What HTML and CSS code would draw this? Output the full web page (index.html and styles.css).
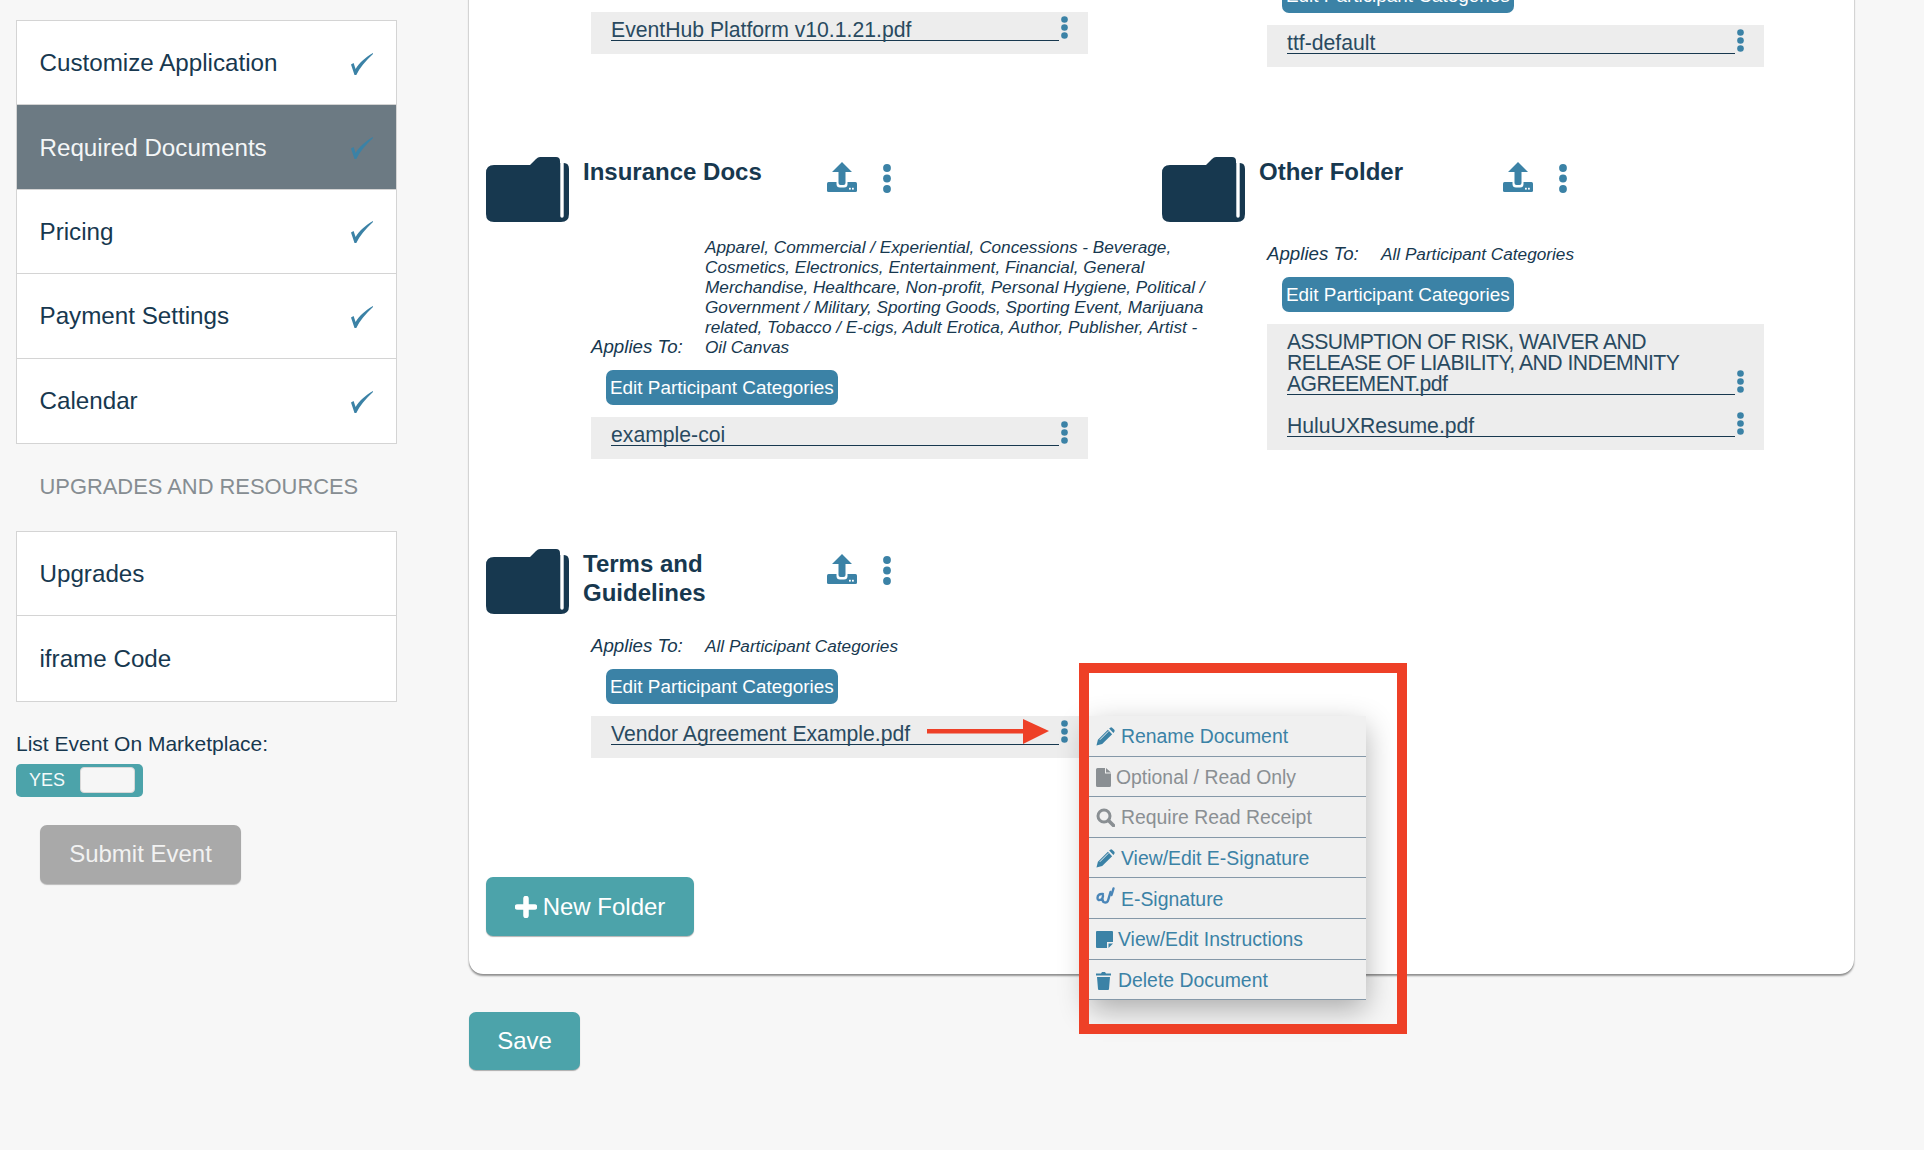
FILE: index.html
```html
<!DOCTYPE html>
<html lang="en">
<head>
<meta charset="utf-8">
<title>Required Documents</title>
<link rel="stylesheet" href="styles.css">
</head>
<body>
<svg class="defs" aria-hidden="true">
  <symbol id="i-check" viewBox="0 0 22 22"><path d="M0 11.5L2.6 10L4.6 16C8 10 15 4 22 0L22 1C14.500 8 8.500 15 5.300 22L3.500 22Z"/></symbol>
  <symbol id="i-dots" viewBox="0 0 7 23"><circle cx="3.500" cy="3.500" r="3.300"/><circle cx="3.500" cy="11.500" r="3.300"/><circle cx="3.500" cy="19.500" r="3.300"/></symbol>
  <symbol id="i-dots-lg" viewBox="0 0 8 29"><circle cx="4" cy="4" r="3.900"/><circle cx="4" cy="14.500" r="3.900"/><circle cx="4" cy="25" r="3.900"/></symbol>
  <symbol id="i-folder" viewBox="0 0 83 65"><path class="f-body" d="M8 8H44L50 2Q52 0 54 0H70Q74 0 74 4V6H78Q83 6 83 12V57Q83 65 75 65H8Q0 65 0 57V16Q0 8 8 8Z"/><path class="f-gap" d="M76 3V59"/></symbol>
  <symbol id="i-upload" viewBox="0 0 30 30"><rect y="20" width="30" height="10" rx="1.500"/><rect class="u-gap" x="9.500" y="17" width="11" height="8.500" rx="3.500"/><path d="M15 0L25 10H18.500V21Q18.500 23 16.500 23H13.500Q11.500 23 11.500 21V10H5Z"/><rect class="u-gap" x="22" y="25.800" width="1.800" height="1.800"/><rect class="u-gap" x="25" y="25.800" width="1.800" height="1.800"/></symbol>
  <symbol id="i-pencil" viewBox="0 0 20 20"><path d="M0.500 19.500L2 13.500L12.500 3L17 7.500L6.500 18ZM13.800 1.700L15 0.700Q16 0 17 0.700L19.300 3Q20 4 19.300 5L18.300 6.200Z"/><path class="m-gap" d="M4 13.500L13 4.500"/></symbol>
</svg>

<div class="page">
  <aside class="sidebar">
    <ul class="nav">
      <li class="nav-item"><span>Customize Application</span><svg class="check"><use href="#i-check"/></svg></li>
      <li class="nav-item is-active"><span>Required Documents</span><svg class="check"><use href="#i-check"/></svg></li>
      <li class="nav-item"><span>Pricing</span><svg class="check"><use href="#i-check"/></svg></li>
      <li class="nav-item"><span>Payment Settings</span><svg class="check"><use href="#i-check"/></svg></li>
      <li class="nav-item"><span>Calendar</span><svg class="check"><use href="#i-check"/></svg></li>
    </ul>
    <h3 class="nav-heading">UPGRADES AND RESOURCES</h3>
    <ul class="nav">
      <li class="nav-item"><span>Upgrades</span></li>
      <li class="nav-item"><span>iframe Code</span></li>
    </ul>
    <div class="market-label">List Event On Marketplace:</div>
    <div class="toggle"><span class="toggle-text">YES</span><span class="toggle-handle"></span></div>
    <button class="btn-submit" type="button">Submit Event</button>
  </aside>

  <main class="main">
    <section class="card">
      <div class="folders">
        <div class="folder">
          <div class="folder-body">
            <button class="btn-edit" type="button">Edit Participant Categories</button>
            <div class="files">
              <div class="file"><a class="file-link">EventHub Platform v10.1.21.pdf</a><svg class="dots"><use href="#i-dots"/></svg></div>
            </div>
          </div>
        </div>
        <div class="folder folder-offset">
          <div class="folder-body">
            <button class="btn-edit" type="button">Edit Participant Categories</button>
            <div class="files">
              <div class="file"><a class="file-link">ttf-default</a><svg class="dots"><use href="#i-dots"/></svg></div>
            </div>
          </div>
        </div>

        <div class="folder">
          <div class="folder-head">
            <svg class="folder-icon"><use href="#i-folder"/></svg>
            <h2 class="folder-title">Insurance Docs</h2>
            <svg class="upload"><use href="#i-upload"/></svg>
            <svg class="dots-lg"><use href="#i-dots-lg"/></svg>
          </div>
          <div class="folder-body">
            <div class="applies">
              <span class="applies-label">Applies To:</span>
              <span class="applies-value">Apparel, Commercial / Experiential, Concessions - Beverage, Cosmetics, Electronics, Entertainment, Financial, General Merchandise, Healthcare, Non-profit, Personal Hygiene, Political / Government / Military, Sporting Goods, Sporting Event, Marijuana related, Tobacco / E-cigs, Adult Erotica, Author, Publisher, Artist - Oil Canvas</span>
            </div>
            <button class="btn-edit" type="button">Edit Participant Categories</button>
            <div class="files">
              <div class="file"><a class="file-link">example-coi</a><svg class="dots"><use href="#i-dots"/></svg></div>
            </div>
          </div>
        </div>

        <div class="folder">
          <div class="folder-head">
            <svg class="folder-icon"><use href="#i-folder"/></svg>
            <h2 class="folder-title">Other Folder</h2>
            <svg class="upload"><use href="#i-upload"/></svg>
            <svg class="dots-lg"><use href="#i-dots-lg"/></svg>
          </div>
          <div class="folder-body">
            <div class="applies applies-single">
              <span class="applies-label">Applies To:</span>
              <span class="applies-value">All Participant Categories</span>
            </div>
            <button class="btn-edit" type="button">Edit Participant Categories</button>
            <div class="files">
              <div class="file"><a class="file-link file-link-caps">ASSUMPTION OF RISK, WAIVER AND RELEASE OF LIABILITY, AND INDEMNITY AGREEMENT.pdf</a><svg class="dots"><use href="#i-dots"/></svg></div>
              <div class="file"><a class="file-link">HuluUXResume.pdf</a><svg class="dots"><use href="#i-dots"/></svg></div>
            </div>
          </div>
        </div>

        <div class="folder">
          <div class="folder-head">
            <svg class="folder-icon"><use href="#i-folder"/></svg>
            <h2 class="folder-title">Terms and Guidelines</h2>
            <svg class="upload"><use href="#i-upload"/></svg>
            <svg class="dots-lg"><use href="#i-dots-lg"/></svg>
          </div>
          <div class="folder-body">
            <div class="applies applies-single">
              <span class="applies-label">Applies To:</span>
              <span class="applies-value">All Participant Categories</span>
            </div>
            <button class="btn-edit" type="button">Edit Participant Categories</button>
            <div class="files">
              <div class="file"><a class="file-link">Vendor Agreement Example.pdf</a><svg class="dots"><use href="#i-dots"/></svg></div>
              <svg class="arrow" viewBox="0 0 122 25"><rect y="10" width="98" height="4.500"/><path d="M96 0L122 12L96 25Z"/></svg>
              <ul class="menu">
                <li class="menu-item"><svg class="mi mi-pencil"><use href="#i-pencil"/></svg>Rename Document</li>
                <li class="menu-item is-muted"><svg class="mi mi-file" viewBox="0 0 15 19"><path d="M0 1.500Q0 0 1.500 0H9V5.500H15V17.500Q15 19 13.500 19H1.500Q0 19 0 17.500ZM10 0L15 4.500H10Z"/></svg>Optional / Read Only</li>
                <li class="menu-item is-muted"><svg class="mi mi-search" viewBox="0 0 19 19"><circle class="m-line" cx="8" cy="8" r="6"/><path class="m-line m-thick" d="M12.500 12.500L17.500 17.500"/></svg>Require Read Receipt</li>
                <li class="menu-item"><svg class="mi mi-pencil"><use href="#i-pencil"/></svg>View/Edit E-Signature</li>
                <li class="menu-item"><svg class="mi mi-sign" viewBox="0 0 19 19"><path class="m-sig" d="M7 7Q1.500 6.500 1.500 11Q1.500 14.500 6 12L7.500 15Q11.500 17 12.500 12L14.500 5"/><path class="m-sig" d="M17.500 1.500L15.500 8M7 9L6 13"/></svg>E-Signature</li>
                <li class="menu-item"><svg class="mi mi-note" viewBox="0 0 17 17"><path d="M0 1Q0 0 1 0H16Q17 0 17 1V11H11V17H1Q0 17 0 16ZM12.500 12.500H17L12.500 17Z"/></svg>View/Edit Instructions</li>
                <li class="menu-item"><svg class="mi mi-trash" viewBox="0 0 15 19"><path d="M0 2.500H5L6 1H9L10 2.500H15V4.500H0ZM1 6H14L13 18Q13 19 12 19H3Q2 19 2 18Z"/></svg>Delete Document</li>
              </ul>
              <div class="callout"></div>
            </div>
          </div>
        </div>
      </div>
      <button class="btn-teal btn-new" type="button"><svg class="plus" viewBox="0 0 22 22"><path d="M11 2.500V19.500M2.500 11H19.500"/></svg>New Folder</button>
    </section>
    <button class="btn-teal btn-save" type="button">Save</button>
  </main>
</div>
</body>
</html>
```
FILE: styles.css
```css
* { box-sizing: border-box; }
html, body { margin: 0; height: 1150px; overflow: hidden; }
body {
  background: #f7f7f7;
  color: #17384f;
  font-family: "Liberation Sans", Arial, sans-serif;
}
button { font-family: inherit; border: 0; cursor: pointer; }
ul { list-style: none; margin: 0; padding: 0; }
.defs { position: absolute; width: 0; height: 0; }

.page {
  display: grid;
  grid-template-columns: 381px 1385px;
  column-gap: 72px;
  align-items: start;
  padding-left: 16px;
}

/* Sidebar */
.sidebar { padding-top: 20px; }
.nav { background: #fff; border: 1px solid #d4d4d4; }
.nav-item {
  display: flex;
  align-items: center;
  justify-content: space-between;
  height: 84.4px;
  padding: 1px 23px 0 22.5px;
  font-size: 24.2px;
  border-bottom: 1px solid #d4d4d4;
}
.nav-item:last-child { border-bottom: 0; }
.nav-item.is-active { background: #6c7a83; color: #f4f6f7; }
.check { width: 22px; height: 22px; fill: #3b82a6; margin-top: 1px; }
.nav-heading {
  margin: 28px 0 29px 23.5px;
  font-size: 21.9px;
  font-weight: 400;
  line-height: 30px;
  color: #868d92;
}
.market-label { margin-top: 29px; font-size: 21px; line-height: 26px; }
.toggle {
  display: flex;
  align-items: center;
  justify-content: space-between;
  width: 127px;
  height: 33px;
  margin-top: 7px;
  padding: 0 8px 0 13px;
  background: #4ca3aa;
  border-radius: 5px;
}
.toggle-text { font-size: 18px; color: #f4fafa; }
.toggle-handle {
  width: 55px;
  height: 26px;
  background: #f6f6f6;
  border: 1px solid #d8d8d8;
  border-radius: 4px;
}
.btn-submit {
  display: block;
  width: 201px;
  height: 59px;
  margin: 28px 0 0 24px;
  padding: 0;
  font-size: 24px;
  color: #f2f2f2;
  background: #a9a9a9;
  border-radius: 7px;
  box-shadow: 0 1px 1px rgba(0,0,0,.25);
}

/* Main card */
.card {
  margin-top: -60px;
  padding: 25px 0 38px 17px;
  background: #fff;
  border-radius: 0 0 14px 14px;
  box-shadow: 0 2px 2px rgba(0,0,0,.4), 0 0 1px rgba(0,0,0,.35);
}
.folders {
  display: grid;
  grid-template-columns: 676px 676px;
  row-gap: 90.5px;
  align-items: start;
}
.folder-offset { padding-top: 13px; }
.folder-head { display: flex; align-items: flex-start; height: 65px; }
.folder-icon { flex: none; width: 83px; height: 65px; }
.f-body { fill: #17384f; }
.f-gap { fill: none; stroke: #fff; stroke-width: 3.4; stroke-linecap: round; }
.folder-title {
  flex: none;
  width: 244px;
  margin: 1px 0 0 14px;
  padding-right: 60px;
  font-size: 24px;
  line-height: 28.7px;
  font-weight: 700;
}
.upload { flex: none; width: 30px; height: 30px; margin-top: 5px; fill: #3b82a6; }
.u-gap { fill: #fff; }
.dots-lg { flex: none; width: 8px; height: 29px; margin: 7px 0 0 26px; fill: #3b82a6; }

.folder-body { margin-left: 105px; width: 497px; }
.applies {
  display: flex;
  align-items: flex-end;
  margin: 15px 0 13px;
  font-style: italic;
  line-height: 20px;
}
.applies-single { margin-top: 22px; }
.applies-label { flex: none; width: 114px; font-size: 18.7px; }
.applies-value { width: 505px; flex: none; font-size: 17.2px; }
.btn-edit {
  display: block;
  width: 232px;
  height: 35px;
  margin-left: 15px;
  padding: 0 0 0 4px;
  text-align: left;
  white-space: nowrap;
  font-size: 18.9px;
  color: #fff;
  background: #3b82a6;
  border-radius: 7px;
}
.files {
  position: relative;
  display: flex;
  flex-direction: column;
  gap: 20px;
  margin-top: 12px;
  padding: 7px 20px 12.5px;
  background: #ededed;
}
.file { display: flex; align-items: flex-end; }
.file-link {
  width: 448px;
  flex: none;
  font-size: 21.2px;
  line-height: 21px;
  color: #294a60;
  border-bottom: 1.5px solid #17384f;
}
.file-link-caps { letter-spacing: -0.52px; }
.dots { flex: none; width: 7px; height: 23px; margin: -4px 0 2px 1.5px; fill: #3b82a6; }

/* Annotation and context menu */
.arrow { position: absolute; left: 336px; top: 3px; width: 122px; height: 25px; fill: #ee4027; }
.callout {
  position: absolute;
  left: 488px;
  top: -53px;
  width: 328px;
  height: 371px;
  border: 10px solid #ee4027;
}
.menu {
  position: absolute;
  left: 498px;
  top: 0;
  width: 277px;
  background: #f0f0f0;
  box-shadow: 0 10px 28px rgba(0,0,0,.3);
}
.menu-item {
  display: flex;
  align-items: center;
  height: 40.6px;
  padding: 2px 0 0 7px;
  font-size: 19.400px;
  color: #3b82a6;
  border-bottom: 1px solid #8598a8;
  white-space: nowrap;
}
.menu-item.is-muted { color: #8a8f93; }
.mi { flex: none; fill: currentColor; }
.mi-pencil { width: 19px; height: 19px; margin-right: 6px; }
.mi-file { width: 15px; height: 19px; margin-right: 5px; }
.mi-search { width: 19px; height: 19px; margin-right: 6px; }
.mi-sign { width: 19px; height: 19px; margin-right: 6px; margin-top: -6px; }
.mi-note { width: 17px; height: 17px; margin-right: 5px; }
.mi-trash { width: 15px; height: 19px; margin-right: 7px; }
.m-gap { fill: none; stroke: #f0f0f0; stroke-width: 1; }
.m-line { fill: none; stroke: currentColor; stroke-width: 3; }
.m-thick { stroke-width: 3.600; stroke-linecap: round; }
.m-sig { fill: none; stroke: #4a86b8; stroke-width: 2.400; stroke-linecap: round; }

/* Teal buttons */
.btn-teal {
  display: flex;
  align-items: center;
  justify-content: center;
  padding: 0;
  font-size: 24px;
  color: #fff;
  background: #4ca3aa;
  border-radius: 7px;
  box-shadow: 0 1px 1px rgba(0,0,0,.3);
}
.btn-new { width: 208px; height: 59px; margin-top: 119.5px; gap: 6px; }
.btn-save { width: 111px; height: 58px; margin-top: 38px; }
.plus { width: 22px; height: 22px; fill: none; stroke: #fff; stroke-width: 5.500; stroke-linecap: round; }
```
